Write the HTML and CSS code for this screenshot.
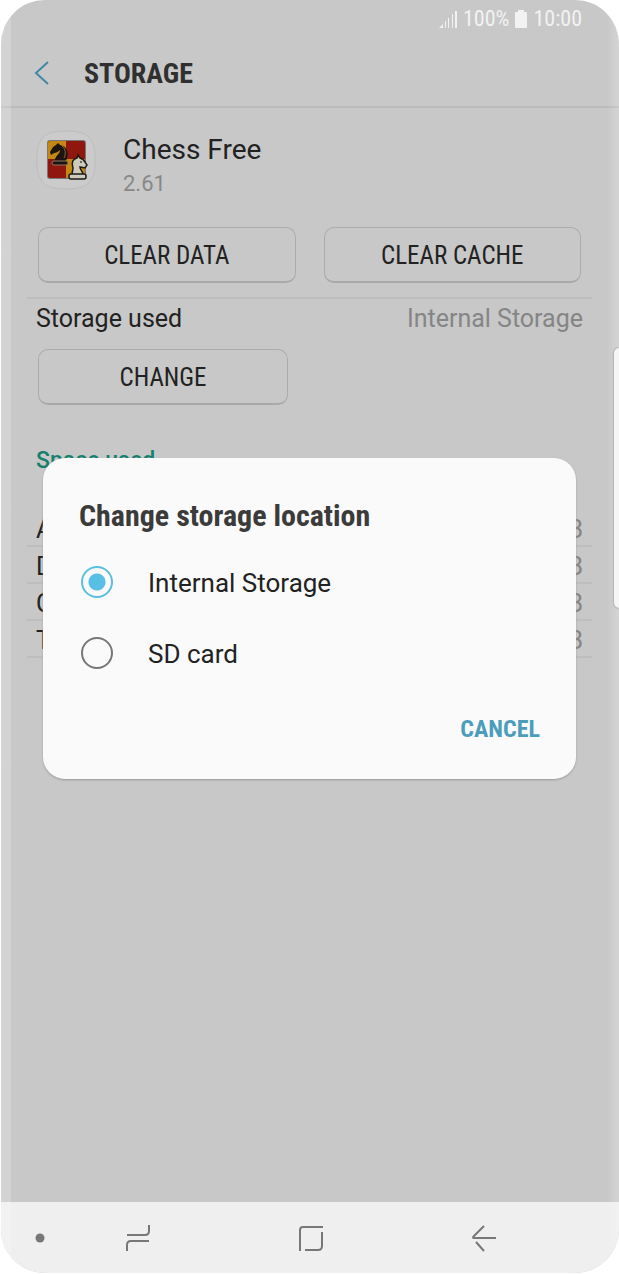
FILE: index.html
```html
<!DOCTYPE html>
<html lang="en">
<head>
<meta charset="utf-8">
<meta name="viewport" content="width=device-width, initial-scale=1">
<title>Storage</title>
<link rel="stylesheet" href="styles.css">
</head>
<body>
<div class="phone">
  <div class="screen">
    <div class="status">
      <svg class="signal" viewBox="0 0 18 18" aria-hidden="true"><path d="M0 18l4-4v4zM6 11h1v7H6zM9 8h1v10H9zM13 4h1v14h-1zM16 1h2v17h-2z"/></svg>
      <span>100%</span>
      <svg class="battery" viewBox="0 0 12 18" aria-hidden="true"><path d="M3 0h6v2h2q1 0 1 1v14q0 1-1 1H1q-1 0-1-1V3q0-1 1-1h2z"/></svg>
      <span>10:00</span>
    </div>
    <header class="header">
      <button class="back" aria-label="Back"><svg viewBox="0 0 16 26" aria-hidden="true"><path d="M14 2L2 13l12 11"/></svg></button>
      <h1 class="title">STORAGE</h1>
    </header>
    <main class="content">
      <section class="app">
        <svg class="app-icon" viewBox="0 0 60 60" aria-hidden="true">
          <path class="tile" d="M30 1C52 1 59 8 59 30S52 59 30 59 1 52 1 30 8 1 30 1z"/>
          <rect x="11" y="10" width="39" height="39" rx="3" fill="#777"/>
          <rect x="12" y="11" width="37" height="37" rx="2" fill="#8f170e"/>
          <path d="M14 11h16v18H12V13q0-2 2-2zM30 29h19v19H30z" fill="#c48711"/>
          <path d="M18 31l2-4c2-3 4-4 4-7-2 2-4 3-6 3l-3 2-1-3 3-5 3-2 2-2 2 2c7 1 9 8 7 13l-1 3z" fill="#1d1410"/>
          <path d="M26 16c4 3 4 8 2 12" fill="none" stroke="#8f6840"/>
          <rect x="16" y="31" width="16" height="4" rx="2" fill="#1d1410" stroke="#8f7a62"/>
          <path d="M36 45c0-3 1-5 1-7-2-6 0-9 4-10l1-3 2 3c4 1 5 4 7 7l-2 3-5-1c0 3 3 4 3 8z" fill="#cfcbbc" stroke="#1d1b17" stroke-width="1.5"/>
          <rect x="33" y="44" width="17" height="5" rx="2" fill="#cfcbbc" stroke="#1d1b17" stroke-width="1.5"/>
          <circle cx="45" cy="32" r="1" fill="#4d4a40"/>
        </svg>
        <div>
          <h2 class="app-name">Chess Free</h2>
          <p class="version">2.61</p>
        </div>
      </section>
      <div class="actions">
        <button class="btn">CLEAR DATA</button>
        <button class="btn">CLEAR CACHE</button>
      </div>
      <section class="location">
        <div class="used"><span>Storage used</span><span class="value">Internal Storage</span></div>
        <button class="btn change">CHANGE</button>
      </section>
      <h3 class="space">Space used</h3>
      <table class="sizes">
        <tr><th scope="row">App</th><td>0 B</td></tr>
        <tr><th scope="row">Data</th><td>0 B</td></tr>
        <tr><th scope="row">Cache</th><td>0 B</td></tr>
        <tr><th scope="row">Total</th><td>0 B</td></tr>
      </table>
    </main>
    <div class="edge-panel"></div>
  </div>
  <nav class="nav">
    <button class="nav-btn nav-dot" aria-label="Hide navigation"><svg viewBox="0 0 10 10" aria-hidden="true"><circle class="dot" cx="5" cy="5" r="4.5"/></svg></button>
    <button class="nav-btn" aria-label="Recent apps"><svg viewBox="0 0 28 28" aria-hidden="true"><path d="M3 11h18q4 0 4-4V1M3 27v-6q0-4 4-4h18"/></svg></button>
    <button class="nav-btn" aria-label="Home"><svg viewBox="0 0 28 28" aria-hidden="true"><path d="M3 27V6q0-3 3-3h20M25 8v14q0 4-4 4H8"/></svg></button>
    <button class="nav-btn" aria-label="Back"><svg viewBox="0 0 28 28" aria-hidden="true"><path d="M14 2L4 12q-2 2 0 2h22M6 18l8 9"/></svg></button>
  </nav>
  <div class="dialog" role="dialog" aria-labelledby="dialog-title">
    <h2 class="dialog-title" id="dialog-title">Change storage location</h2>
    <label class="option"><input class="radio" type="radio" name="location" checked><span>Internal Storage</span></label>
    <label class="option"><input class="radio" type="radio" name="location"><span>SD card</span></label>
    <button class="cancel">CANCEL</button>
  </div>
</div>
</body>
</html>
```
FILE: styles.css
```css
* { box-sizing: border-box; }
body { margin: 0; background: #fff; color: #222; font-family: Roboto, sans-serif; }
h1, h2, h3, p { margin: 0; font-weight: 400; }
button { margin: 0; padding: 0; border: 0; background: none; color: inherit; font: inherit; }
svg { display: block; }

.phone {
  position: relative;
  display: flex;
  flex-direction: column;
  min-height: calc(100vh - 1px);
  margin: 0 0 1px 1px;
  overflow: hidden;
  border-radius: 44px;
  background: #c8c8c8;
}
.phone::after {
  content: "";
  position: absolute;
  inset: 0;
  pointer-events: none;
  background:
    linear-gradient(90deg, #ffffff38, #ffffff30) left / 10px 100% no-repeat,
    linear-gradient(90deg, #ffffff00, #ffffff38) right / 12px 100% no-repeat;
}
.screen { position: relative; flex: 1; }
.status {
  display: flex;
  justify-content: flex-end;
  align-items: center;
  gap: 6px;
  height: 38px;
  padding-right: 37px;
  color: #f2f2f2;
  font: 22px/38px "Roboto Condensed", Roboto, sans-serif;
}
.status svg { fill: #f2f2f2; }
.signal { width: 18px; height: 18px; }
.battery { width: 12px; height: 18px; }

.header {
  display: flex;
  align-items: center;
  gap: 34px;
  height: 70px;
  padding: 2px 0 0 33px;
  border-bottom: 2px solid #bbb;
}
.back svg { width: 16px; height: 26px; fill: none; stroke: #4288a4; stroke-width: 2; }
.title { padding-top: 2px; color: #303030; font: 700 28px/32px "Roboto Condensed", Roboto, sans-serif; }

.content { padding: 22px 27px 0 26px; }
.app { display: flex; gap: 27px; padding-left: 9px; }
.app-icon { width: 60px; height: 60px; }
.tile { fill: #cbcbcb; stroke: #bcbcbc; }
.app-name { font-size: 28px; line-height: 40px; }
.version { color: #888; font-size: 22px; line-height: 28px; }
.actions { display: flex; gap: 28px; padding: 29px 11px 14px; border-bottom: 2px solid #bebebe; }
.btn {
  flex: 1;
  height: 56px;
  padding-top: 3px;
  border: 1px solid #acacac;
  border-bottom: 2px solid #a9a9a9;
  border-radius: 10px;
  font: 25px/30px "Roboto Condensed", Roboto, sans-serif;
}
.location { padding: 4px 9px 0; }
.used { display: flex; justify-content: space-between; font-size: 25px; line-height: 32px; }
.value { color: #858585; }
.change { width: 250px; margin: 14px 2px 0; }
.space { margin-top: 39px; padding-left: 9px; color: #14806f; font-size: 23px; font-weight: 500; line-height: 34px; }
.sizes { width: 100%; margin-top: 32px; border-collapse: collapse; font-size: 25px; line-height: 31px; }
.sizes th, .sizes td { height: 36px; padding: 4px 9px 0; border-bottom: 2px solid #bebebe; font-weight: 400; text-align: left; }
.sizes td { color: #858585; text-align: right; }
.edge-panel {
  position: absolute;
  right: 0;
  top: 348px;
  z-index: 1;
  width: 5px;
  height: 260px;
  border-radius: 6px 0 0 6px;
  background: #f5f5f5;
  box-shadow: 0 0 2px #777;
}

.nav {
  display: grid;
  grid-template-columns: 22px repeat(3, 1fr);
  align-items: center;
  height: 71px;
  padding: 0 49px 0 28px;
  background: #efefef;
}
.nav-btn { display: grid; place-items: center; height: 71px; }
.nav-btn svg { width: 28px; height: 28px; fill: none; stroke: #777; stroke-width: 2; }
.nav-dot svg { width: 10px; height: 10px; }
.nav-btn .dot { fill: #777; stroke: none; }

.dialog {
  position: absolute;
  top: 458px;
  right: 43px;
  left: 42px;
  display: flex;
  flex-direction: column;
  padding: 38px 36px 31px;
  border-radius: 22px;
  background: #fafafa;
  box-shadow: 0 1px 2px #999;
}
.dialog-title { margin-bottom: 10px; color: #3b3b3b; font: 700 30px/40px "Roboto Condensed", Roboto, sans-serif; }
.option { display: flex; align-items: center; gap: 35px; height: 71px; padding-left: 2px; font-size: 26px; line-height: 32px; }
.option span { padding-top: 2px; }
.radio {
  appearance: none;
  flex: none;
  width: 32px;
  height: 32px;
  margin: 0;
  border: 2px solid #777;
  border-radius: 50%;
}
.radio:checked { border-color: #5bbfe2; background: radial-gradient(circle, #58c0e5 8px, #fafafa 9px); }
.cancel { align-self: flex-end; margin-top: 23px; color: #4c9dbc; font: 700 24px/37px "Roboto Condensed", Roboto, sans-serif; }
```
